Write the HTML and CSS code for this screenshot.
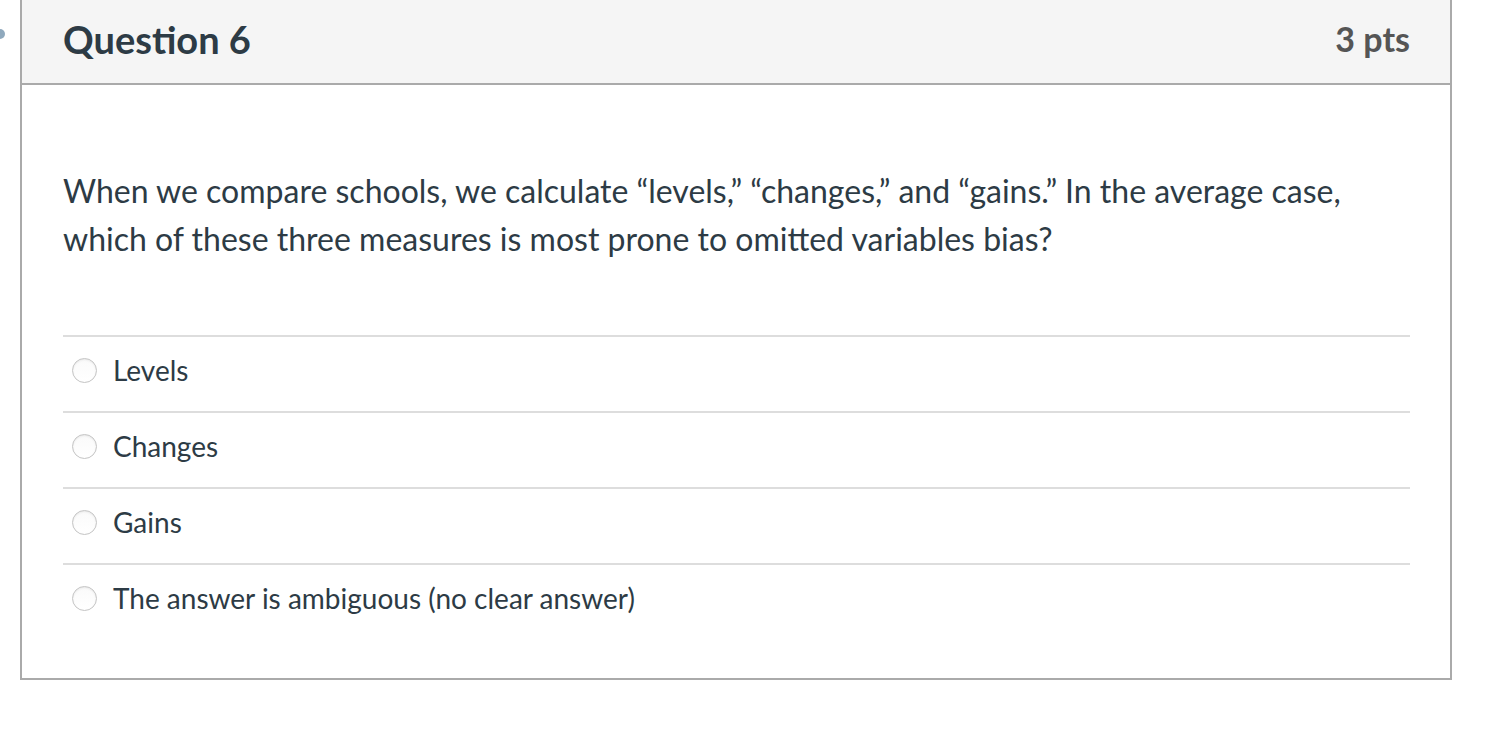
FILE: index.html
```html
<!DOCTYPE html>
<html>
<head>
<meta charset="utf-8">
<link rel="stylesheet" href="styles.css">
</head>
<body>
<div class="page">
  <span class="edge-dot"></span>
  <div class="question">
    <div class="header">
      <span class="title">Question 6</span>
      <span class="pts">3 pts</span>
    </div>
    <div class="content">
      <p class="text">When we compare schools, we calculate “levels,” “changes,” and “gains.” In the average case, which of these three measures is most prone to omitted variables bias?</p>
      <div class="answers">
        <label class="answer"><span class="radio"></span><span class="label">Levels</span></label>
        <label class="answer"><span class="radio"></span><span class="label">Changes</span></label>
        <label class="answer"><span class="radio"></span><span class="label">Gains</span></label>
        <label class="answer"><span class="radio"></span><span class="label">The answer is ambiguous (no clear answer)</span></label>
      </div>
    </div>
  </div>
</div>
</body>
</html>
```

FILE: styles.css
```css
html, body {
  margin: 0;
  padding: 0;
  background: #fff;
}
body {
  font-family: Lato, "Open Sans", sans-serif;
  color: #2d3b45;
  overflow: hidden;
}
.page {
  position: relative;
  padding-left: 20px;
  width: 1432px;
}
.edge-dot {
  position: absolute;
  left: -5px;
  top: 31px;
  width: 10px;
  height: 10px;
  border-radius: 50%;
  background: #8fa9bd;
}
.question {
  margin-top: -2px;
  border: 2px solid #aaaaaa;
  background: #fff;
}
.header {
  display: flex;
  align-items: center;
  justify-content: space-between;
  padding: 0 40px 6px 41px;
  box-sizing: border-box;
  height: 85px;
  background: #f5f5f5;
  border-bottom: 2px solid #aaaaaa;
}
.title {
  font-size: 38px;
  font-weight: 700;
  color: #2d3b45;
}
.pts {
  font-size: 34px;
  font-weight: 700;
  color: #555555;
}
.content {
  padding: 82px 40px 39px 41px;
}
.text {
  margin: 0;
  font-size: 32px;
  line-height: 48px;
}
.answers {
  margin-top: 72px;
}
.answer {
  display: flex;
  align-items: center;
  height: 74px;
  box-sizing: content-box;
  padding-bottom: 0;
  border-top: 2px solid #dddddd;
  gap: 16px;
  padding-left: 9px;
}
.answer .radio,
.answer .label {
  position: relative;
  top: -4px;
}
.radio {
  width: 23px;
  height: 23px;
  border-radius: 50%;
  border: 1px solid #c4c4c4;
  background: linear-gradient(#fafafa, #ffffff);
  box-shadow: inset 0 1px 2px rgba(0,0,0,0.08);
  flex: none;
}
.label {
  font-size: 28px;
}
```
